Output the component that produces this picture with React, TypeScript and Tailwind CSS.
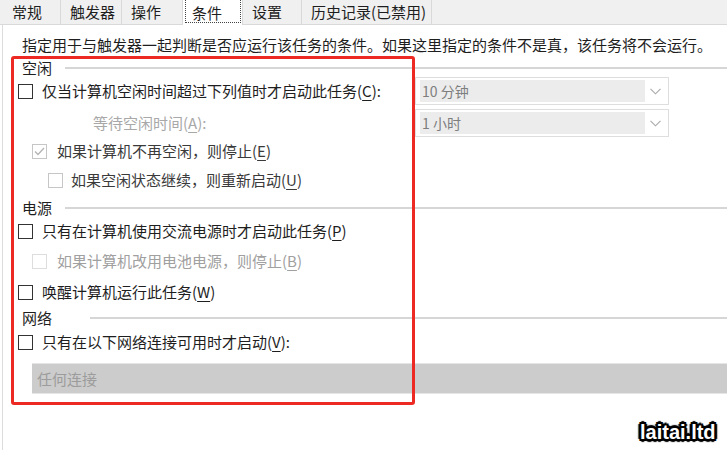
import React from 'react';
import clsx from 'clsx';

const tabs = [
  { label: '常规', w: 'w-[58px]' },
  { label: '触发器', w: 'w-[61px]' },
  { label: '操作', w: 'w-[61px]' },
  { label: '条件', w: 'w-[60px]', active: true },
  { label: '设置', w: 'w-[59px]' },
  { label: '历史记录(已禁用)', w: 'w-[130px]' },
];

const Key = ({ k }: { k: string }) => <span className="underline underline-offset-[3px] decoration-1">{k}</span>;

type Tone = 'dark' | 'mid' | 'light';

const Box = ({ tone, checked }: { tone: Tone; checked?: boolean }) => (
  <span
    className={clsx(
      'w-[15px] h-[15px] border bg-white flex items-center justify-center shrink-0',
      tone === 'dark' && 'border-[#333333]',
      tone === 'mid' && 'border-[#c6c6c6]',
      tone === 'light' && 'border-[#dddddd]'
    )}
  >
    {checked && (
      <svg width="11" height="9" viewBox="0 0 11 9" fill="none">
        <path d="M1 4.5 L4 7.5 L10 1" stroke="#b4b4b4" strokeWidth="1.3" />
      </svg>
    )}
  </span>
);

const Chevron = () => (
  <svg width="11" height="7" viewBox="0 0 11 7" fill="none" className="ml-auto mr-[7px]">
    <path d="M0.5 0.8 L5.5 5.8 L10.5 0.8" stroke="#a9a9a9" strokeWidth="1.1" />
  </svg>
);

const Combo = ({ value }: { value: string }) => (
  <div className="w-[254px] h-[28px] mr-[58px] border border-[#dedede] bg-white flex items-center shrink-0">
    <div className="ml-[4px] w-[225px] h-[22px] bg-[#ececec] flex items-center pl-[2px] text-[14px] text-[#7e7e7e]">
      {value}
    </div>
    <Chevron />
  </div>
);

const Header = ({ label, gap, mt }: { label: string; gap: string; mt: string }) => (
  <div className={clsx('h-[22px] flex items-center pl-[19px]', mt)}>
    <span>{label}</span>
    <span className={clsx('flex-1 h-[2px] bg-[#d6d6d6]', gap)} />
  </div>
);

export default function App() {
  return (
    <div className="relative w-[727px] h-[450px] bg-white overflow-hidden font-['Microsoft_YaHei','Noto_Sans_CJK_SC',sans-serif] text-[15px] leading-[22px] text-[#1e1e1e]">
      <div className="h-[25px] bg-[#f0f0f0] border-b border-[#d9d9d9] flex pl-[3px]">
        {tabs.map((t) => (
          <div
            key={t.label}
            className={clsx(
              'relative h-[24px] flex items-center pl-[9px] border-r border-[#d9d9d9]',
              t.w,
              t.active && 'bg-white h-[25px]'
            )}
          >
            {t.label}
            {t.active && (
              <span className="absolute left-[2px] right-[1px] top-[-1px] bottom-[2px] border border-dotted border-[#444444]" />
            )}
          </div>
        ))}
      </div>

      <div className="ml-[2px] h-[425px] border-l border-[#dcdcdc] flex flex-col pt-[9px]">
        <div className="h-[22px] flex items-center pl-[19px] whitespace-nowrap">
          指定用于与触发器一起判断是否应运行该任务的条件。如果这里指定的条件不是真，该任务将不会运行。
        </div>

        <Header label="空闲" gap="ml-[13px]" mt="mt-[1px]" />

        <div className="h-[22px] mt-[1px] flex items-center pl-[15px]">
          <Box tone="dark" />
          <span className="ml-[9px] flex-1">
            仅当计算机空闲时间超过下列值时才启动此任务(<Key k="C" />):
          </span>
          <Combo value="10 分钟" />
        </div>

        <div className="h-[22px] mt-[10px] flex items-center pl-[90px]">
          <span className="flex-1 text-[#a8a8a8]">
            等待空闲时间(<Key k="A" />):
          </span>
          <Combo value="1 小时" />
        </div>

        <div className="h-[22px] mt-[6px] flex items-center pl-[29px]">
          <Box tone="mid" checked />
          <span className="ml-[10px] text-[#3a3a3a]">
            如果计算机不再空闲，则停止(<Key k="E" />)
          </span>
        </div>

        <div className="h-[22px] mt-[7px] flex items-center pl-[45px]">
          <Box tone="mid" />
          <span className="ml-[8px] text-[#3a3a3a]">
            如果空闲状态继续，则重新启动(<Key k="U" />)
          </span>
        </div>

        <Header label="电源" gap="ml-[13px]" mt="mt-[6px]" />

        <div className="h-[22px] mt-[1px] flex items-center pl-[15px]">
          <Box tone="dark" />
          <span className="ml-[9px]">
            只有在计算机使用交流电源时才启动此任务(<Key k="P" />)
          </span>
        </div>

        <div className="h-[22px] mt-[8px] flex items-center pl-[29px]">
          <Box tone="light" />
          <span className="ml-[10px] text-[#a0a0a0]">
            如果计算机改用电池电源，则停止(<Key k="B" />)
          </span>
        </div>

        <div className="h-[22px] mt-[9px] flex items-center pl-[15px]">
          <Box tone="dark" />
          <span className="ml-[9px]">
            唤醒计算机运行此任务(<Key k="W" />)
          </span>
        </div>

        <Header label="网络" gap="ml-[38px]" mt="mt-[4px]" />

        <div className="h-[22px] mt-[2px] flex items-center pl-[15px]">
          <Box tone="dark" />
          <span className="ml-[9px]">
            只有在以下网络连接可用时才启动(<Key k="V" />):
          </span>
        </div>

        <div className="h-[31px] mt-[10px] ml-[29px] bg-[#cccccc] border-t border-b border-[#e6e6e6] flex items-center pl-[5px] text-[#9c9c9c]">
          任何连接
        </div>
      </div>

      <div className="absolute left-[11px] top-[56px] w-[404px] h-[349px] border-[3px] border-[#ec2a23] rounded-[3px] pointer-events-none" />

      <div className="absolute left-[640px] top-[420px] leading-[24px] text-[20px] font-bold text-white font-['Liberation_Sans',sans-serif] [text-shadow:2px_0_0_#000,-2px_0_0_#000,0_2px_0_#000,0_-2px_0_#000,2px_2px_0_#000,-2px_-2px_0_#000,2px_-2px_0_#000,-2px_2px_0_#000,3px_0_1px_#000,-3px_0_1px_#000,0_3px_1px_#000,0_-3px_1px_#000]">
        laitai.ltd
      </div>
    </div>
  );
}
